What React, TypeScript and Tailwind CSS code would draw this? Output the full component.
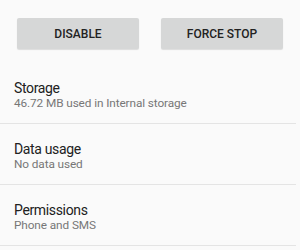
const rows = [
  { title: 'Storage', sub: '46.72 MB used in Internal storage' },
  { title: 'Data usage', sub: 'No data used' },
  { title: 'Permissions', sub: 'Phone and SMS' },
];

export default function App() {
  return (
    <div className="w-[300px] h-[250px] overflow-hidden bg-[#fafafa] font-['Roboto',sans-serif]">
      {/* Action buttons */}
      <div className="flex gap-[22px] px-[17px] pt-[18px] h-[63px]">
        <button className="flex-1 h-[31px] rounded-[2px] bg-[#d6d7d7] shadow-[0_1px_1px_rgba(0,0,0,0.12)] text-[12px] font-medium text-[#222]">
          DISABLE
        </button>
        <button className="flex-1 h-[31px] rounded-[2px] bg-[#d6d7d7] shadow-[0_1px_1px_rgba(0,0,0,0.12)] text-[12px] font-medium text-[#222]">
          FORCE STOP
        </button>
      </div>

      {/* Settings rows */}
      {rows.map((row) => (
        <div key={row.title}>
          <div className="h-[60px] pt-[17px] px-[14px]">
            <div className="text-[14px] leading-[16px] tracking-[-0.35px] text-[#212121]">{row.title}</div>
            <div className="text-[11.8px] leading-[15px] tracking-[-0.1px] text-[#777]">{row.sub}</div>
          </div>
          <div className="h-px bg-[#e4e4e4] mr-[4px]" />
        </div>
      ))}
    </div>
  );
}
